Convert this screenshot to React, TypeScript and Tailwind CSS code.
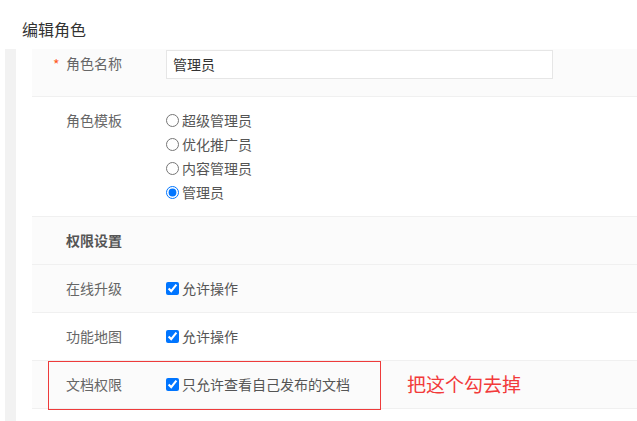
const font = { fontFamily: '"Microsoft YaHei", "Noto Sans CJK SC", "Noto Sans", sans-serif' };

const templates = ["超级管理员", "优化推广员", "内容管理员", "管理员"];

function Row({
  label,
  tinted,
  bold,
  children,
  className = "",
}: {
  label: React.ReactNode;
  tinted?: boolean;
  bold?: boolean;
  children?: React.ReactNode;
  className?: string;
}) {
  return (
    <div
      className={`flex border-b border-[#f0f0f0] ${tinted ? "bg-[#fbfbfb]" : "bg-white"} ${className}`}
    >
      <div
        className={`w-[134px] shrink-0 pl-[34px] text-[14px] ${bold ? "font-bold text-[#555]" : "text-[#666]"}`}
      >
        {label}
      </div>
      <div className="flex-1">{children}</div>
    </div>
  );
}

function Check({ text }: { text: string }) {
  return (
    <label className="flex items-center gap-[3px] text-[14px] text-[#555]">
      <input type="checkbox" defaultChecked className="m-0 h-[13px] w-[13px] accent-[#0075ff]" />
      {text}
    </label>
  );
}

export default function App() {
  return (
    <div className="h-[421px] w-[637px] overflow-hidden bg-white" style={font}>
      <h2 className="pl-[22px] pt-[19px] pb-[9px] text-[16px] leading-[21px] text-[#333]">编辑角色</h2>
      <div className="flex pl-[5px]">
        <div className="w-[11px] shrink-0 bg-[#f2f2f2] h-[373px]" />
        <div className="ml-[16px] flex-1">
          {/* 角色名称 */}
          <Row
            tinted
            className="h-[48px] pt-[1px]"
            label={
              <div className="flex h-[27px] items-center -ml-[13px]">
                <span className="w-[13px] text-[#ff5a1f] text-[14px] leading-none">*</span>
                <span>角色名称</span>
              </div>
            }
          >
            <div className="flex h-[29px] w-[387px] items-center border border-[#e6e6e6] bg-white px-[6px] text-[14px] text-[#333]">
              管理员
            </div>
          </Row>

          {/* 角色模板 */}
          <Row
            className="h-[120px] pt-[15px]"
            label={<div className="leading-[16px]">角色模板</div>}
          >
            <div className="flex flex-col gap-[8px]">
              {templates.map((t, i) => (
                <label key={t} className="flex items-center gap-[3px] text-[14px] leading-[16px] text-[#555]">
                  <input
                    type="radio"
                    name="tpl"
                    defaultChecked={i === 3}
                    className="m-0 h-[13px] w-[13px] accent-[#0075ff]"
                  />
                  {t}
                </label>
              ))}
            </div>
          </Row>

          <Row tinted bold className="h-[48px] items-center" label="权限设置" />

          <Row tinted className="h-[48px] items-center" label="在线升级">
            <Check text="允许操作" />
          </Row>

          <Row className="h-[48px] items-center" label="功能地图">
            <Check text="允许操作" />
          </Row>

          <div className="relative">
            <Row tinted className="h-[48px] items-center" label="文档权限">
              <div className="flex items-center">
                <Check text="只允许查看自己发布的文档" />
                <span className="ml-[57px] text-[19px] text-[#f23a3a]">把这个勾去掉</span>
              </div>
            </Row>
            <div className="pointer-events-none absolute left-[16px] top-0 h-[49px] w-[333px] border border-[#ee3b3b]" />
          </div>
        </div>
      </div>
    </div>
  );
}
